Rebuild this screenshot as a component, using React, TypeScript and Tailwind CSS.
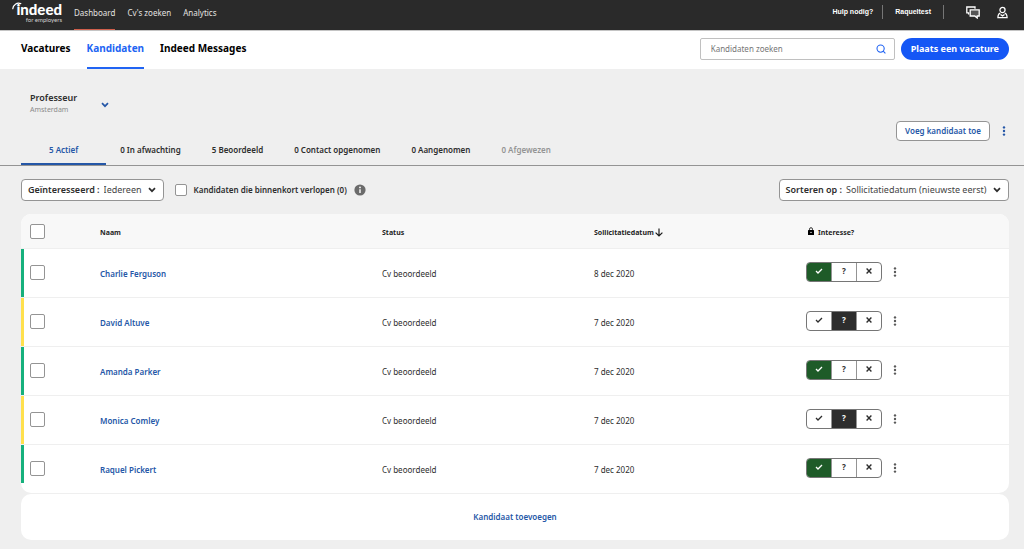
import { useState } from "react";
import { clsx } from "clsx";

type Interest = "yes" | "maybe" | "no";

interface Candidate {
  name: string;
  status: string;
  date: string;
  interest: Interest;
}

const topLinks = ["Dashboard", "Cv's zoeken", "Analytics"];
const mainLinks = ["Vacatures", "Kandidaten", "Indeed Messages"];

const tabs = [
  { label: "5 Actief" },
  { label: "0 In afwachting" },
  { label: "5 Beoordeeld" },
  { label: "0 Contact opgenomen" },
  { label: "0 Aangenomen" },
  { label: "0 Afgewezen", muted: true },
];

const initialCandidates: Candidate[] = [
  { name: "Charlie Ferguson", status: "Cv beoordeeld", date: "8 dec 2020", interest: "yes" },
  { name: "David Altuve", status: "Cv beoordeeld", date: "7 dec 2020", interest: "maybe" },
  { name: "Amanda Parker", status: "Cv beoordeeld", date: "7 dec 2020", interest: "yes" },
  { name: "Monica Comley", status: "Cv beoordeeld", date: "7 dec 2020", interest: "maybe" },
  { name: "Raquel Pickert", status: "Cv beoordeeld", date: "7 dec 2020", interest: "yes" },
];

function Chevron({ className }: { className?: string }) {
  return (
    <svg viewBox="0 0 8 6" className={clsx("h-[6px] w-2 shrink-0", className)} fill="none" stroke="currentColor" strokeWidth="1.7">
      <path d="M1 1.2 4 4.2 7 1.2" />
    </svg>
  );
}

function Dots({ className }: { className?: string }) {
  return (
    <svg viewBox="0 0 4 10" className={clsx("h-[10px] w-1", className)} fill="currentColor">
      <circle cx="2" cy="1.4" r="1.2" />
      <circle cx="2" cy="5" r="1.2" />
      <circle cx="2" cy="8.6" r="1.2" />
    </svg>
  );
}

function Checkbox({ label, small, id }: { label?: string; small?: boolean; id?: string }) {
  return (
    <input
      type="checkbox"
      id={id}
      aria-label={label}
      className={clsx(
        "block shrink-0 appearance-none rounded-[2px] border border-[#949494] bg-white checked:bg-[#2557a7]",
        small ? "size-3" : "size-[15px]"
      )}
    />
  );
}

function Logo() {
  return (
    <a href="#" className="relative flex w-[50px] flex-col items-end pb-[5px] font-['Lato',sans-serif] text-white">
      <svg viewBox="0 0 10 8" className="absolute top-0 left-0 h-2 w-[10px]" fill="none" stroke="currentColor" strokeLinecap="round">
        <path d="M0.8 6.6C1.2 2.8 4.8 0.2 8.8 1.6" strokeWidth="1.2" />
      </svg>
      <span className="text-[15px] leading-[15px] font-black">indeed</span>
      <span className="text-[6px] leading-[6px] text-[#d4d2d0]">for employers</span>
    </a>
  );
}

function TopBar() {
  return (
    <header className="flex h-[30px] items-center justify-between bg-[#2a2a2a] pr-4 pl-3 text-[8px] text-[#e4e2e0]">
      <div className="flex h-full items-center gap-3">
        <Logo />
        <nav className="flex h-full gap-3">
          {topLinks.map((link, i) => (
            <a
              key={link}
              href="#"
              className={clsx("flex items-center", i === 0 ? "border-b border-[#d0604c] pb-[3px]" : "pb-[5px]")}
            >
              {link}
            </a>
          ))}
        </nav>
      </div>
      <div className="flex items-center pb-[6px] font-['Liberation_Sans',sans-serif] text-[7px] font-bold text-white">
        <a href="#" className="border-r border-[#767676] py-[2px] pr-[9px]">Hulp nodig?</a>
        <a href="#" className="border-r border-[#767676] py-[2px] pr-3 pl-3">Raqueltest</a>
        <button type="button" aria-label="Berichten" className="ml-[22px]">
          <svg viewBox="0 0 14 13" className="h-[13px] w-[14px]" fill="none" stroke="currentColor" strokeWidth="1.3">
            <path d="M2.6 8.6V6.8H0.8V1H9V2.8" />
            <path d="M4.2 3.8H13.2V10H11.2V12L8.8 10H4.2Z" fill="#555" />
          </svg>
        </button>
        <button type="button" aria-label="Account" className="ml-[17px]">
          <svg viewBox="0 0 12 13" className="h-[13px] w-[11px]" fill="none" stroke="currentColor" strokeWidth="1.4">
            <circle cx="6" cy="3.8" r="2.8" />
            <path d="M3.6 7.2C1.8 7.6 1 9 1 12.2H11C11 9 10.2 7.6 8.4 7.2" />
            <path d="M3.8 8.6 6 10.2 8.2 8.6" />
          </svg>
        </button>
      </div>
    </header>
  );
}

function MainNav() {
  return (
    <div className="flex h-[39px] items-center justify-between border-t border-[#c4c4c4] bg-white pr-[15px] pl-[21px]">
      <nav className="flex h-full gap-4 text-[10px] font-bold text-black">
        {mainLinks.map((link) => (
          <a
            key={link}
            href="#"
            className={clsx(
              "flex items-center border-b-2 pb-[2px]",
              link === "Kandidaten" ? "border-[#2164f3] text-[#2164f3]" : "border-transparent"
            )}
          >
            {link}
          </a>
        ))}
      </nav>
      <div className="flex items-center gap-[6px] pb-[2px]">
        <form className="flex h-[22px] w-[195px] items-center rounded-[2px] border border-[#c0c0c0] bg-white pr-2 pl-[10px]">
          <input
            type="search"
            aria-label="Kandidaten zoeken"
            placeholder="Kandidaten zoeken"
            className="min-w-0 flex-1 text-[8px] outline-none placeholder:text-[#767676]"
          />
          <button type="button" aria-label="Zoeken" className="text-[#2164f3]">
            <svg viewBox="0 0 10 10" className="size-[10px]" fill="none" stroke="currentColor" strokeWidth="1.1">
              <circle cx="4.6" cy="4.6" r="3.6" />
              <path d="M7.2 7.2 9.4 9.4" />
            </svg>
          </button>
        </form>
        <button type="button" className="h-[22px] rounded-full bg-[#1557f5] px-[10px] text-[9px] font-bold text-white">
          Plaats een vacature
        </button>
      </div>
    </div>
  );
}

function JobHeader() {
  return (
    <section>
      <div className="flex items-start justify-between pt-[22px] pr-[15px] pl-[30px]">
        <div className="flex items-center gap-6">
          <div>
            <h1 className="text-[9px] leading-[14px] font-semibold">Professeur</h1>
            <p className="text-[7px] leading-[10px] text-[#8a8a8a]">Amsterdam</p>
          </div>
          <button type="button" aria-label="Vacature kiezen" className="pt-1 text-[#2557a7]">
            <Chevron />
          </button>
        </div>
        <div className="mt-[30px] flex items-center gap-3">
          <button type="button" className="h-5 rounded-[4px] border border-[#949494] bg-white px-2 text-[8px] font-semibold text-[#2557a7]">
            Voeg kandidaat toe
          </button>
          <button type="button" aria-label="Meer opties" className="text-[#2557a7]">
            <Dots className="mr-[3px]" />
          </button>
        </div>
      </div>
      <nav className="flex border-b border-[#949494] pl-[21px] text-[8px] leading-4 font-semibold">
        {tabs.map((tab, i) => (
          <a
            key={tab.label}
            href="#"
            className={clsx(
              "border-b-2 pt-[1px] pb-[5px]",
              i === 0 ? "mr-[14px] border-[#2557a7] px-7 text-[#2557a7]" : "border-transparent pr-[31px]",
              tab.muted && "text-[#949494]"
            )}
          >
            {tab.label}
          </a>
        ))}
      </nav>
    </section>
  );
}

function FilterSelect({ id, label, options }: { id: string; label: string; options: string[] }) {
  return (
    <div className="relative flex h-[22px] items-center rounded-[4px] border border-[#949494] bg-white pl-[6px] text-[9px]">
      <label htmlFor={id} className="font-semibold">{label} :</label>
      <select id={id} className="h-full appearance-none pr-[21px] pl-1 text-[#444]">
        {options.map((option) => (
          <option key={option}>{option}</option>
        ))}
      </select>
      <Chevron className="pointer-events-none absolute right-[7px]" />
    </div>
  );
}

function Filters() {
  return (
    <div className="flex items-center justify-between">
      <div className="flex items-center gap-[11px]">
        <FilterSelect id="interest" label="Geïnteresseerd" options={["Iedereen"]} />
        <div className="flex items-center gap-[7px]">
          <Checkbox id="expiring" small />
          <label htmlFor="expiring" className="text-[8px] font-semibold">Kandidaten die binnenkort verlopen (0)</label>
          <button type="button" aria-label="Informatie">
            <svg viewBox="0 0 12 12" className="size-3">
              <circle cx="6" cy="6" r="5.6" fill="#6b6b6b" />
              <circle cx="6" cy="3.4" r="0.9" fill="#fff" />
              <path d="M6 5.2V9" stroke="#fff" strokeWidth="1.4" />
            </svg>
          </button>
        </div>
      </div>
      <FilterSelect id="sort" label="Sorteren op" options={["Sollicitatiedatum (nieuwste eerst)"]} />
    </div>
  );
}

const segments: { value: Interest; label: string; active: string }[] = [
  { value: "yes", label: "Ja", active: "bg-[#1e5b28] text-white" },
  { value: "maybe", label: "Misschien", active: "bg-[#2d2d2d] text-white" },
  { value: "no", label: "Nee", active: "bg-[#2d2d2d] text-white" },
];

function InterestToggle({ value, onChange }: { value: Interest; onChange: (value: Interest) => void }) {
  return (
    <div className="flex h-5 w-[76px] divide-x divide-[#949494] overflow-hidden rounded-[4px] border border-[#767676] bg-white">
      {segments.map((s) => (
        <button
          key={s.value}
          type="button"
          aria-label={s.label}
          aria-pressed={value === s.value}
          onClick={() => onChange(s.value)}
          className={clsx("flex flex-1 items-center justify-center pb-px text-[8px] font-bold", value === s.value && s.active)}
        >
          {s.value === "yes" && (
            <svg viewBox="0 0 8 6" className="h-[6px] w-2" fill="none" stroke="currentColor" strokeWidth="1.3">
              <path d="M1 3 3 5 7 1" />
            </svg>
          )}
          {s.value === "maybe" && "?"}
          {s.value === "no" && (
            <svg viewBox="0 0 6 6" className="size-[6px]" fill="none" stroke="currentColor" strokeWidth="1.4">
              <path d="M0.6 0.6 5.4 5.4M5.4 0.6 0.6 5.4" />
            </svg>
          )}
        </button>
      ))}
    </div>
  );
}

function CandidateTable() {
  const [candidates, setCandidates] = useState(initialCandidates);

  const setInterest = (name: string, interest: Interest) => {
    setCandidates(candidates.map((c) => (c.name === name ? { ...c, interest } : c)));
  };

  return (
    <div className="overflow-hidden rounded-[10px] bg-white">
      <table className="w-full table-fixed text-left text-[8px]">
        <thead className="bg-[#f8f8f8] text-[7px] text-[#1f1f1f]">
          <tr className="h-[34px]">
            <th className="w-[79px] pt-px pl-[9px]">
              <Checkbox label="Alles selecteren" />
            </th>
            <th className="pt-1">Naam</th>
            <th className="w-[212px] pt-1">Status</th>
            <th className="w-[212px] pt-1">
              <span className="flex items-center gap-px">
                Sollicitatiedatum
                <svg viewBox="0 0 8 9" className="mb-px h-[9px] w-2" fill="none" stroke="currentColor" strokeWidth="1.2">
                  <path d="M4 0.4V8M0.6 4.6 4 8 7.4 4.6" />
                </svg>
              </span>
            </th>
            <th className="w-[203px] pt-1">
              <span className="flex items-center gap-1 pl-[2px]">
                <svg viewBox="0 0 6 8" className="mb-[3px] h-2 w-[6px]">
                  <path d="M1.5 3.4V2.2a1.5 1.5 0 0 1 3 0V3.4" fill="none" stroke="currentColor" strokeWidth="0.9" />
                  <rect y="3" width="6" height="5" rx="0.5" fill="#000" />
                  <circle cx="3" cy="5.4" r="0.7" fill="#fff" />
                </svg>
                Interesse?
              </span>
            </th>
          </tr>
        </thead>
        <tbody>
          {candidates.map((c, i) => (
            <tr key={c.name} className="border-t border-[#efefef]">
              <td className="p-0">
                <div className="flex h-12 items-center gap-[6px]">
                  <span
                    className={clsx(
                      "w-[3px] self-start",
                      i === candidates.length - 1 ? "h-[38px]" : "h-12",
                      c.interest === "maybe" ? "bg-[#ffe04d]" : "bg-[#16b07c]"
                    )}
                  />
                  <Checkbox label={c.name} />
                </div>
              </td>
              <td className="pt-[2px]">
                <a href="#" className="font-semibold text-[#2557a7]">{c.name}</a>
              </td>
              <td className="pt-[2px]">{c.status}</td>
              <td className="pt-[2px]">{c.date}</td>
              <td>
                <div className="flex items-center gap-[11px] pb-[2px]">
                  <InterestToggle value={c.interest} onChange={(value) => setInterest(c.name, value)} />
                  <button type="button" aria-label="Meer opties" className="pt-px text-[#595959]">
                    <Dots />
                  </button>
                </div>
              </td>
            </tr>
          ))}
        </tbody>
      </table>
    </div>
  );
}

export default function App() {
  return (
    <div className="min-h-screen bg-[#efefef] font-['Noto_Sans',sans-serif] text-[#2d2d2d]">
      <TopBar />
      <MainNav />
      <JobHeader />
      <main className="flex flex-col gap-[13px] pt-[13px] pr-[15px] pb-[9px] pl-[21px]">
        <Filters />
        <div className="flex flex-col gap-px">
          <CandidateTable />
          <div className="flex h-[46px] items-center justify-center rounded-[10px] bg-white">
            <button type="button" className="text-[8px] font-semibold text-[#2557a7]">Kandidaat toevoegen</button>
          </div>
        </div>
      </main>
    </div>
  );
}
